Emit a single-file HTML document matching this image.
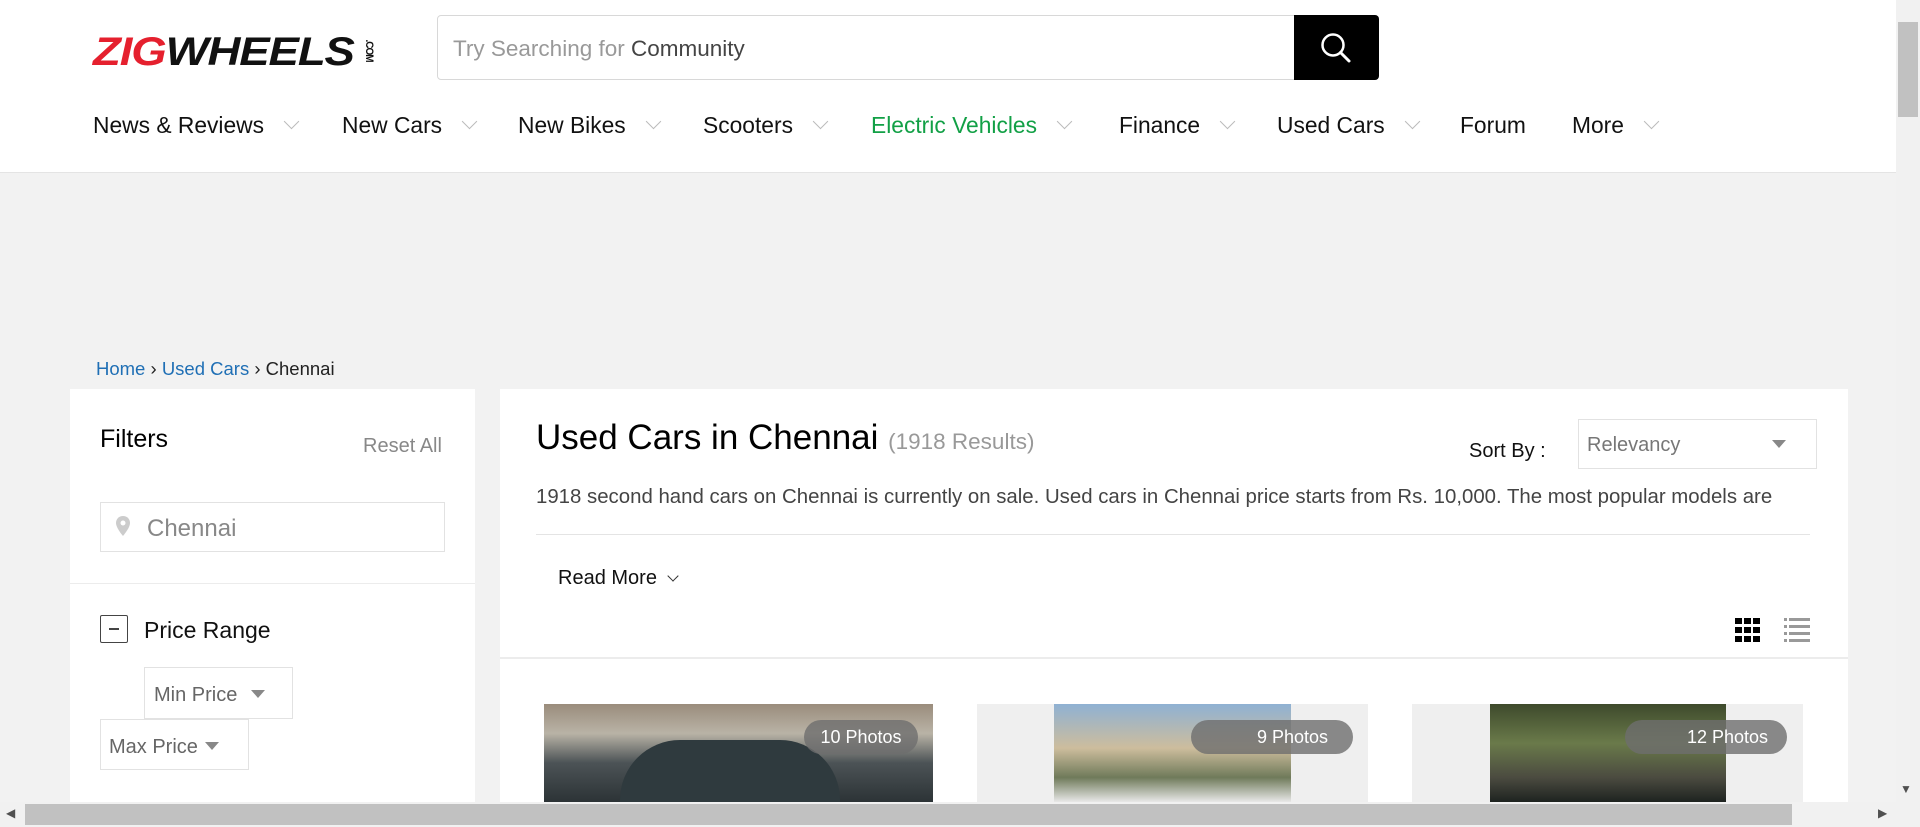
<!DOCTYPE html>
<html><head><meta charset="utf-8"><style>
*{box-sizing:border-box;margin:0;padding:0}
body{width:1920px;height:827px;overflow:hidden;background:#f2f2f2;font-family:"Liberation Sans",sans-serif;position:relative;color:#111}
.a{position:absolute}
.hdr{left:0;top:0;width:1896px;height:173px;background:#fff;border-bottom:1px solid #e4e4e4}
.logo{left:93px;top:30px;font-size:40px;font-weight:bold;font-style:italic;letter-spacing:-1px;transform:scaleX(1.14);transform-origin:left;white-space:nowrap}
.nav{top:112px;font-size:22.8px;color:#111;white-space:nowrap}
.chev{display:inline-block;width:11px;height:11px;border-right:1.5px solid #bbb;border-bottom:1.5px solid #bbb;transform:rotate(45deg);margin-left:22px;position:relative;top:-6px}
.panel{background:#fff}
.badge{height:34px;border-radius:17px;background:rgba(110,110,110,.8);color:#fff;font-size:18px;line-height:34px;text-align:center}
.box{border:1px solid #e2e2e2;background:#fff}
.tri{display:inline-block;border-left:7px solid transparent;border-right:7px solid transparent;border-top:8px solid #888}
</style></head><body>
<div class="a hdr"></div>
<div class="a logo"><span style="color:#e5202e">ZIG</span><span style="color:#111">WHEELS</span><span style="font-size:10px;color:#111;font-style:normal;display:inline-block;transform:rotate(90deg);position:relative;top:-12px;left:2px">.COM</span></div>
<div class="a" style="left:437px;top:15px;width:870px;height:65px;border:1px solid #d8d8d8;border-radius:4px;background:#fff"></div>
<div class="a" style="left:453px;top:36px;font-size:22.5px;color:#999">Try Searching for <span style="color:#444">Community</span></div>
<div class="a" style="left:1294px;top:15px;width:85px;height:65px;background:#000;border-radius:0 4px 4px 0"></div>
<svg class="a" style="left:1318px;top:30px" width="36" height="36" viewBox="0 0 36 36"><circle cx="15" cy="15" r="10.5" fill="none" stroke="#fff" stroke-width="2.5"/><line x1="22.5" y1="22.5" x2="31" y2="31" stroke="#fff" stroke-width="3" stroke-linecap="round"/></svg>
<div class="a nav" style="left:93px">News &amp; Reviews<span class="chev"></span></div>
<div class="a nav" style="left:342px">New Cars<span class="chev"></span></div>
<div class="a nav" style="left:518px">New Bikes<span class="chev"></span></div>
<div class="a nav" style="left:703px">Scooters<span class="chev"></span></div>
<div class="a nav" style="left:871px;color:#12a046">Electric Vehicles<span class="chev"></span></div>
<div class="a nav" style="left:1119px">Finance<span class="chev"></span></div>
<div class="a nav" style="left:1277px">Used Cars<span class="chev"></span></div>
<div class="a nav" style="left:1460px">Forum</div>
<div class="a nav" style="left:1572px">More<span class="chev"></span></div>

<div class="a" style="left:96px;top:358px;font-size:18.5px;color:#222"><span style="color:#1f6fb5">Home</span> › <span style="color:#1f6fb5">Used Cars</span> › Chennai</div>

<div class="a panel" style="left:70px;top:389px;width:405px;height:420px"></div>
<div class="a" style="left:100px;top:425px;font-size:25px;color:#000">Filters</div>
<div class="a" style="left:363px;top:435px;font-size:20px;color:#888">Reset All</div>
<div class="a box" style="left:100px;top:502px;width:345px;height:50px"></div>
<svg class="a" style="left:115px;top:515px" width="16" height="22" viewBox="0 0 16 22"><path d="M8 1C4 1 1 4 1 8c0 5 7 13 7 13s7-8 7-13c0-4-3-7-7-7z" fill="#ccc"/><circle cx="8" cy="8" r="2.5" fill="#fff"/></svg>
<div class="a" style="left:147px;top:515px;font-size:24px;color:#888">Chennai</div>
<div class="a" style="left:70px;top:583px;width:405px;height:1px;background:#ececec"></div>
<div class="a" style="left:100px;top:615px;width:28px;height:28px;border:1.5px solid #444;border-radius:2px"></div>
<div class="a" style="left:109px;top:628px;width:10px;height:1.5px;background:#444"></div>
<div class="a" style="left:144px;top:617px;font-size:23px;color:#111">Price Range</div>
<div class="a box" style="left:144px;top:667px;width:149px;height:52px"></div>
<div class="a" style="left:154px;top:684px;font-size:20px;color:#666">Min Price <span class="tri" style="margin-left:8px;position:relative;top:-3px"></span></div>
<div class="a box" style="left:100px;top:719px;width:149px;height:51px"></div>
<div class="a" style="left:109px;top:736px;font-size:20px;color:#666">Max Price <span class="tri" style="margin-left:2px;position:relative;top:-3px"></span></div>

<div class="a panel" style="left:500px;top:389px;width:1348px;height:420px"></div>
<div class="a" style="left:536px;top:418px;font-size:35px;color:#000">Used Cars in Chennai <span style="font-size:22.5px;color:#999">(1918 Results)</span></div>
<div class="a" style="left:1469px;top:440px;font-size:20px;color:#111">Sort By :</div>
<div class="a box" style="left:1578px;top:419px;width:239px;height:50px"></div>
<div class="a" style="left:1587px;top:434px;font-size:20px;color:#777">Relevancy</div>
<span class="a tri" style="left:1772px;top:440px"></span>
<div class="a" style="left:536px;top:486px;font-size:20.4px;color:#444;white-space:nowrap">1918 second hand cars on Chennai is currently on sale. Used cars in Chennai price starts from Rs. 10,000. The most popular models are</div>
<div class="a" style="left:536px;top:534px;width:1274px;height:1px;background:#e4e4e4"></div>
<div class="a" style="left:558px;top:567px;font-size:20px;color:#111">Read More <span style="display:inline-block;width:8px;height:8px;border-right:1.5px solid #333;border-bottom:1.5px solid #333;transform:rotate(45deg);margin-left:6px;position:relative;top:-4px"></span></div>
<svg class="a" style="left:1735px;top:618px" width="26" height="24" viewBox="0 0 26 24"><g fill="#000"><rect x="0" y="0" width="7" height="6"/><rect x="9" y="0" width="7" height="6"/><rect x="18" y="0" width="7" height="6"/><rect x="0" y="9" width="7" height="6"/><rect x="9" y="9" width="7" height="6"/><rect x="18" y="9" width="7" height="6"/><rect x="0" y="18" width="7" height="6"/><rect x="9" y="18" width="7" height="6"/><rect x="18" y="18" width="7" height="6"/></g></svg>
<svg class="a" style="left:1784px;top:618px" width="26" height="24" viewBox="0 0 26 24"><g fill="#999"><rect x="0" y="0" width="3" height="3"/><rect x="5" y="0" width="21" height="3"/><rect x="0" y="7" width="3" height="3"/><rect x="5" y="7" width="21" height="3"/><rect x="0" y="14" width="3" height="3"/><rect x="5" y="14" width="21" height="3"/><rect x="0" y="21" width="3" height="3"/><rect x="5" y="21" width="21" height="3"/></g></svg>
<div class="a" style="left:500px;top:657px;width:1348px;height:2px;background:#ececec"></div>

<div class="a" style="left:544px;top:704px;width:389px;height:98px;background:linear-gradient(180deg,#9a8c7c 0%,#b9b3a6 30%,#4c5356 60%,#2c3336 100%)"></div>
<div class="a" style="left:620px;top:740px;width:220px;height:62px;border-radius:60px 60px 0 0;background:#2f3a3e"></div>
<div class="a badge" style="left:804px;top:720px;width:114px">10 Photos</div>
<div class="a" style="left:977px;top:704px;width:391px;height:98px;background:#efefef"></div>
<div class="a" style="left:1054px;top:704px;width:237px;height:98px;background:linear-gradient(180deg,#8fb1d3 0%,#cdbd9d 45%,#6f7a5a 75%,#e8e8e8 100%)"></div>
<div class="a badge" style="left:1191px;top:720px;width:162px;text-align:left;padding-left:66px">9 Photos</div>
<div class="a" style="left:1412px;top:704px;width:391px;height:98px;background:#efefef"></div>
<div class="a" style="left:1490px;top:704px;width:236px;height:98px;background:linear-gradient(180deg,#3e4a2c 0%,#6a7a4a 40%,#4b4b40 75%,#1e2320 100%)"></div>
<div class="a badge" style="left:1625px;top:720px;width:162px;text-align:left;padding-left:62px">12 Photos</div>

<div class="a" style="left:1896px;top:0;width:24px;height:802px;background:#f1f1f1"></div>
<div class="a" style="left:1898px;top:22px;width:20px;height:95px;background:#c1c1c1"></div>
<div class="a" style="left:1900px;top:782px;font-size:12px;color:#505050">▼</div>
<div class="a" style="left:0;top:802px;width:1920px;height:25px;background:#f1f1f1"></div>
<div class="a" style="left:25px;top:804px;width:1767px;height:21px;background:#c1c1c1"></div>
<div class="a" style="left:6px;top:806px;font-size:12px;color:#505050">◀</div>
<div class="a" style="left:1878px;top:806px;font-size:12px;color:#505050">▶</div>
</body></html>
